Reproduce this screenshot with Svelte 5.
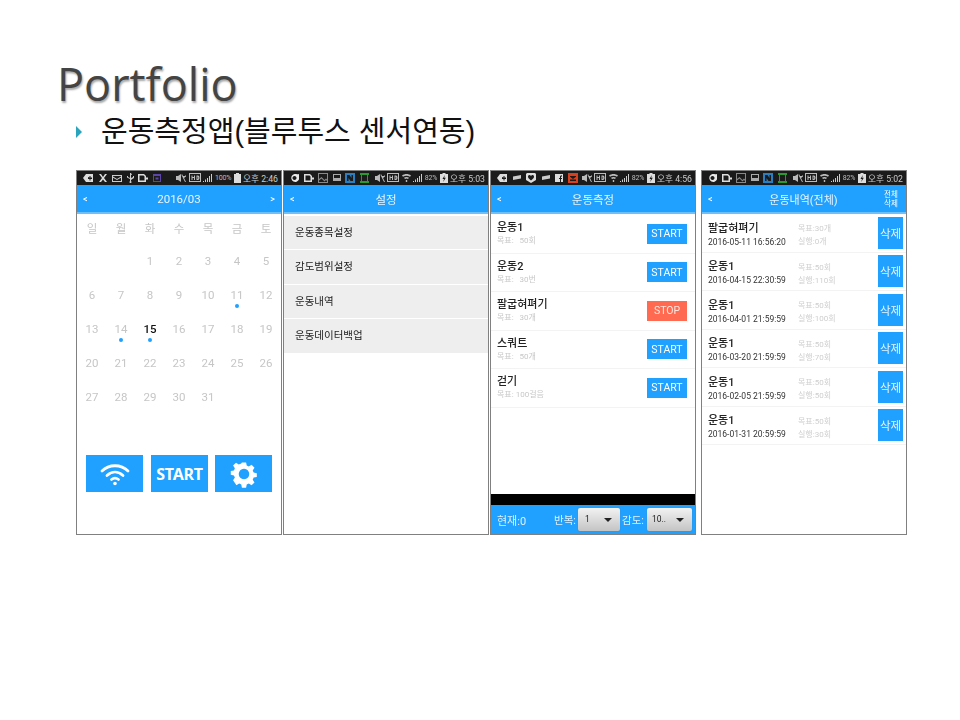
<script>
  const glyphs = {
    plus: { w: 10, fill: '#ddd', d: 'M3 1h7v8H3L0 5zM5 4v2h1.500v1.600h1V6H9V4.600H7.500V3h-1v1.600z' },
    tools: { w: 10, fill: '#ddd', d: 'M1 1l2 0 2 3 2-3 2 0-3 4 3 4H7L5 6.500 3 9H1l3-4z' },
    mail: { w: 10, fill: '#ccc', d: 'M0 2h10v7H0zM1 3v.600l4 2.400 4-2.400V3zM1 4.800V8h8V4.800L5 7z' },
    usb: { w: 7, fill: '#ccc', d: 'M3 0h1l1 2H4v3l2-1V3h1v2L4 7v1.200a1 1 0 1 1-1 0V6L0 4.600V3h1v1l2 1z' },
    doc: { w: 10, fill: '#ddd', d: 'M0 1h6l2 2v1.500h2v2H8V9H0zM1.500 2.500v5h5V3.500l-1-1z' },
    cal: { w: 8, fill: '#5b45a8', d: 'M0 1h8v8H0zM1 3v5h6V3zM2.500 4.500h3v2h-3z' },
    g: { w: 9, fill: '#e8e8e8', d: 'M4.500 1C6 1 7.400 1.400 9 1v2.400A4 4 0 1 1 4.500 1zM4.500 3a2 2 0 1 0 .01 0z' },
    pic: { w: 10, fill: '#888', d: 'M0 0h10v10H0zM1 1v5l2.500-2 3 3L8 5.500 9 6.500V1zM1 7.500V9h8V8L8 7 6.500 8.500 3.500 5.500z' },
    img: { w: 8, fill: '#aaa', d: 'M0 1h8v7H0zM1 2v3h6V2z' },
    n: { w: 10, fill: '#2a7fc0', d: 'M0 0h10v10H0zM2 2v6h1.500V5l2 3H8V2H6.500v3l-2-3z' },
    square: { w: 9, fill: '#2a9a30', d: 'M0 0h9v2H8V8h1v2H0V8h1V2H0zM2 2v6h5V2z' },
    mute: { w: 10, fill: '#bbb', d: 'M0 3h2l3-2v8L2 7H0zM6 1l4 8H9L5.500 2zM7 3l2 0 1-1v1.500L8 5z' },
    hd: { w: 12, fill: '#bbb', d: 'M0 0h12v9H0zM1 1v7h10V1zM2.500 2.500h1v1.500h1.500V2.500h1v4.500H5V5H3.500v2h-1zM7.500 2.500h1.500c2 0 2 4.500 0 4.500H7.500zM8.500 3.500v2.500c1 .300 1-2.800 0-2.500z' },
    wifi: { w: 9, fill: '#bbb', d: 'M0 2.500C2.500.500 6.500.500 9 2.500L8 3.800C6 2.300 3 2.300 1 3.800zM2 4.800C3.500 3.600 5.500 3.600 7 4.800L6 6C5 5.200 4 5.200 3 6zM3.800 7h1.400v2H3.800z' },
    signal: { w: 9, fill: '#ccc', d: 'M0 8h1v1H0zM2 6.500h1V9H2zM4 5h1v4H4zM6 3h1v6H6zM8 1h1v8H8z' },
    bat100: { w: 7, fill: '#ddd', d: 'M2 0h3v1h2v9H0V1h2z' },
    bat: { w: 8, fill: '#ddd', d: 'M0 1h2.500V0h3v1H8v9H0zM4.800 2L2.500 6h1.500L3.200 9 5.800 4.800H4.200z' },
    pill: { w: 10, fill: '#ccc', d: 'M1 3.500L9 2v3.500L1 7z' },
    heart: { w: 10, fill: '#ddd', d: 'M1 0h8l1 1v6L5 10 0 7V1zM5 3C4 1.500 2 2 2 3.800 2 5.500 4 6.500 5 7.500c1-1 3-2 3-3.700C8 2 6 1.500 5 3z' },
    f: { w: 8, fill: '#ddd', d: 'M0 1h8v8H6V6h1V5H6V4c0-.500.300-.700 1-.600V2.400C5.500 2.200 5 3 5 4v1H4v1h1v3H0z' },
    red: { w: 10, fill: '#d8401f', d: 'M0 0h10v10H0zM2 3v.800L5 6l3-2.200V3zM2 6.500V8h6V6.500z' }
  };

  const rightIcons = ['mute', 'hd', 'wifi', 'signal'];

  const days = [
    ['', '', '1', '2', '3', '4', '5'],
    ['6', '7', '8', '9', '10', '11', '12'],
    ['13', '14', '15', '16', '17', '18', '19'],
    ['20', '21', '22', '23', '24', '25', '26'],
    ['27', '28', '29', '30', '31', '', '']
  ].flat();
  const weekdays = ['일', '월', '화', '수', '목', '금', '토'];
  const dotted = ['11', '14', '15'];

  const settings = ['운동종목설정', '감도범위설정', '운동내역', '운동데이터백업'];

  const workouts = [
    { name: '운동1', goal: '목표:   50회', action: 'START' },
    { name: '운동2', goal: '목표:   30번', action: 'START' },
    { name: '팔굽혀펴기', goal: '목표:   30개', action: 'STOP' },
    { name: '스쿼트', goal: '목표:   50개', action: 'START' },
    { name: '걷기', goal: '목표: 100걸음', action: 'START' }
  ];

  const history = [
    { name: '팔굽혀펴기', date: '2016-05-11 16:56:20', goal: '목표:30개', done: '실행:0개' },
    { name: '운동1', date: '2016-04-15 22:30:59', goal: '목표:50회', done: '실행:110회' },
    { name: '운동1', date: '2016-04-01 21:59:59', goal: '목표:50회', done: '실행:100회' },
    { name: '운동1', date: '2016-03-20 21:59:59', goal: '목표:50회', done: '실행:70회' },
    { name: '운동1', date: '2016-02-05 21:59:59', goal: '목표:50회', done: '실행:50회' },
    { name: '운동1', date: '2016-01-31 20:59:59', goal: '목표:50회', done: '실행:30회' }
  ];
</script>

{#snippet icon(name)}
  <svg width={glyphs[name].w} height="10" viewBox="0 0 {glyphs[name].w} 10" aria-hidden="true">
    <path d={glyphs[name].d} fill={glyphs[name].fill} fill-rule="evenodd" />
  </svg>
{/snippet}

{#snippet statusbar(left, right, level, battery, time)}
  <div class="status">
    <div class="status-group">
      {#each left as name}{@render icon(name)}{/each}
    </div>
    <div class="status-group right">
      {#each right as name}{@render icon(name)}{/each}
      <span class="level">{level}</span>
      {@render icon(battery)}
      <span class="time">{time}</span>
    </div>
  </div>
{/snippet}

<main class="slide">
  <h1>Portfolio</h1>
  <div class="subtitle">
    <span class="bullet"></span>
    <span>운동측정앱(블루투스 센서연동)</span>
  </div>

  <div class="screens">
    <section class="screen">
      {@render statusbar(['plus', 'tools', 'mail', 'usb', 'doc', 'cal'], ['mute', 'hd', 'signal'], '100%', 'bat100', '오후 2:46')}
      <header class="bar">
        <span class="nav">&lt;</span>
        <span class="bar-title">2016/03</span>
        <span class="nav">&gt;</span>
      </header>
      <div class="weekdays">
        {#each weekdays as d}<span>{d}</span>{/each}
      </div>
      <div class="calendar">
        {#each days as d}
          <span class="day" class:today={d === '15'}>
            {d}
            {#if dotted.includes(d)}<i class="dot"></i>{/if}
          </span>
        {/each}
      </div>
      <div class="actions">
        <button class="action" aria-label="wifi">
          <svg width="30" height="24" viewBox="0 0 30 24" fill="none" stroke="#fff" stroke-width="2.800" stroke-linecap="round">
            <path d="M2 9C9 2 21 2 28 9" />
            <path d="M7 13.500C12 9 18 9 23 13.500" />
            <path d="M11.500 17.500C13.500 16 16.500 16 18.500 17.500" />
            <circle cx="15" cy="21.500" r="1.800" fill="#fff" stroke="none" />
          </svg>
        </button>
        <button class="action start">START</button>
        <button class="action" aria-label="settings">
          <svg width="28" height="28" viewBox="0 0 24 24">
            <path fill="#fff" fill-rule="evenodd" d="M10 1h4l.600 3 2 .900 2.600-1.700 2.800 2.800-1.700 2.600.900 2 3 .600v3.600l-3 .600-.900 2 1.700 2.600-2.800 2.800-2.600-1.700-2 .900-.600 3h-4l-.600-3-2-.900-2.600 1.700L1.600 18l1.700-2.600-.900-2-3-.600V9.200l3-.600.900-2L1.600 4 4.400 1.200l2.600 1.700 2.400-.900zM12 7a5 5 0 1 0 .01 0z" transform="translate(1.200 1.200) scale(.9)" />
          </svg>
        </button>
      </div>
    </section>

    <section class="screen">
      {@render statusbar(['g', 'doc', 'pic', 'img', 'n', 'square'], rightIcons, '82%', 'bat', '오후 5:03')}
      <header class="bar">
        <span class="nav">&lt;</span>
        <span class="bar-title">설정</span>
        <span class="nav"></span>
      </header>
      <div class="settings">
        {#each settings as s}<div class="setting">{s}</div>{/each}
      </div>
    </section>

    <section class="screen">
      {@render statusbar(['plus', 'pill', 'heart', 'pill', 'f', 'red'], rightIcons, '82%', 'bat', '오후 4:56')}
      <header class="bar">
        <span class="nav">&lt;</span>
        <span class="bar-title">운동측정</span>
        <span class="nav"></span>
      </header>
      <div class="workouts">
        {#each workouts as w}
          <div class="workout">
            <div>
              <div class="w-name">{w.name}</div>
              <div class="w-goal">{w.goal}</div>
            </div>
            <button class="w-btn" class:stop={w.action === 'STOP'}>{w.action}</button>
          </div>
        {/each}
      </div>
      <div class="blackbar"></div>
      <footer class="controls">
        <span class="current">현재:0</span>
        <span class="lab">반복:</span>
        <span class="select one">1<i></i></span>
        <span class="lab two">감도:</span>
        <span class="select ten">10..<i></i></span>
      </footer>
    </section>

    <section class="screen last">
      {@render statusbar(['g', 'doc', 'pic', 'img', 'n', 'square'], rightIcons, '82%', 'bat', '오후 5:02')}
      <header class="bar">
        <span class="nav">&lt;</span>
        <span class="bar-title small">운동내역(전체)</span>
        <span class="nav all">전체<br />삭제</span>
      </header>
      <div class="history">
        {#each history as h}
          <div class="record">
            <div class="r-main">
              <div class="r-name">{h.name}</div>
              <div class="r-date">{h.date}</div>
            </div>
            <div class="r-meta">
              <div>{h.goal}</div>
              <div>{h.done}</div>
            </div>
            <button class="del">삭제</button>
          </div>
        {/each}
      </div>
    </section>
  </div>
</main>

<style>
  :global(body) {
    margin: 0;
    background: #fff;
  }
  .slide {
    width: 960px;
    height: 720px;
    box-sizing: border-box;
    padding: 58px 0 0 76px;
    overflow: hidden;
    font-family: Roboto, "Noto Sans CJK KR", sans-serif;
  }
  h1 {
    margin: 0 0 0 -19px;
    height: 54px;
    font: 400 45px/52px "Open Sans", sans-serif;
    color: #444;
    text-shadow: 1px 2px 2px rgba(0, 0, 0, 0.35);
  }
  .subtitle {
    display: flex;
    align-items: center;
    height: 40px;
    font: 400 29px/40px "Liberation Sans", "Noto Sans CJK KR", sans-serif;
    color: #111;
  }
  .bullet {
    width: 0;
    height: 0;
    margin-right: 19px;
    border-left: 6px solid #2aa3bd;
    border-top: 6px solid transparent;
    border-bottom: 6px solid transparent;
  }
  .screens {
    display: flex;
    gap: 1px;
    margin-top: 18px;
    filter: blur(0.3px);
    will-change: filter;
  }
  .screen {
    width: 206px;
    height: 365px;
    box-sizing: border-box;
    border: 1px solid #808080;
    display: flex;
    flex-direction: column;
  }
  .screen.last {
    margin-left: 4px;
  }
  .status {
    flex: none;
    height: 14px;
    background: #1b1b1b;
    display: flex;
    justify-content: space-between;
    align-items: center;
    padding: 0 3px 0 6px;
    overflow: hidden;
  }
  .status-group {
    display: flex;
    align-items: center;
    gap: 4.500px;
  }
  .status-group.right {
    gap: 2.500px;
  }
  .level {
    font-size: 7px;
    color: #bbb;
    letter-spacing: -0.2px;
  }
  .time {
    font-size: 8.700px;
    color: #ccc;
    white-space: nowrap;
  }
  .bar {
    flex: none;
    height: 29px;
    box-sizing: border-box;
    border-bottom: 2px solid #6cc0ff;
    background: #20a0ff;
    color: #fff;
    display: flex;
    align-items: center;
    justify-content: space-between;
    padding: 1px 6px 0;
  }
  .nav {
    width: 14px;
    font-size: 9px;
    font-weight: 500;
    text-align: left;
  }
  .nav:last-child {
    text-align: right;
  }
  .bar-title {
    font-size: 11.500px;
    color: #e8f5ff;
  }
  .bar-title.small {
    font-size: 11px;
    margin-left: 2px;
  }
  .all {
    font-size: 7.500px;
    font-weight: 400;
    line-height: 9px;
    text-align: center !important;
    width: 16px;
    margin-right: 1px;
  }
  .weekdays,
  .calendar {
    display: grid;
    grid-template-columns: repeat(7, 29px);
    padding-left: 0.500px;
    text-align: center;
    color: #c6c6c6;
    font-size: 11.500px;
  }
  .weekdays {
    height: 28px;
    align-items: center;
  }
  .calendar {
    margin-top: 2px;
    grid-auto-rows: 34px;
  }
  .day {
    position: relative;
    display: flex;
    align-items: center;
    justify-content: center;
  }
  .today {
    color: #111;
    font-weight: 500;
  }
  .dot {
    position: absolute;
    left: 50%;
    top: 26px;
    width: 4px;
    height: 4px;
    margin-left: -2px;
    border-radius: 50%;
    background: #20a0ff;
  }
  .actions {
    display: flex;
    margin: 41px 0 0 9px;
    gap: 8px;
  }
  .action {
    width: 57px;
    height: 37px;
    padding: 0;
    border: 0;
    border-radius: 0;
    background: #20a0ff;
    color: #fff;
    display: flex;
    align-items: center;
    justify-content: center;
    font: 700 16px "Noto Sans", sans-serif;
  }
  .action.start {
    letter-spacing: -0.2px;
  }
  .action:last-child {
    margin-left: -1px;
  }
  .settings {
    margin-top: 2px;
  }
  .setting {
    height: 33.400px;
    margin-bottom: 1px;
    padding-left: 11px;
    background: #eee;
    color: #222;
    font-size: 10.500px;
    line-height: 34px;
  }
  .workouts,
  .history {
    flex: 1;
  }
  .workouts {
    padding-top: 1px;
  }
  .workout {
    height: 38.500px;
    box-sizing: border-box;
    border-bottom: 1px solid #f3f3f3;
    display: flex;
    align-items: center;
    justify-content: space-between;
    padding: 0 8px 0 6px;
  }
  .w-name {
    font-size: 11px;
    font-weight: 500;
    line-height: 14px;
    color: #222;
  }
  .w-goal {
    font-size: 8px;
    line-height: 11px;
    color: #c8c8c8;
    white-space: pre;
  }
  .w-btn {
    width: 40px;
    height: 20px;
    padding: 0;
    border: 0;
    border-radius: 0;
    background: #20a0ff;
    color: #fff;
    font: 400 10.500px Roboto, sans-serif;
  }
  .w-btn.stop {
    background: #ff6a50;
    color: #ffe6e0;
  }
  .blackbar {
    flex: none;
    height: 11px;
    background: #000;
  }
  .controls {
    flex: none;
    height: 29px;
    background: #20a0ff;
    color: #dff1ff;
    font-size: 11px;
    display: flex;
    align-items: center;
    padding-left: 6px;
  }
  .current {
    width: 57px;
  }
  .lab {
    width: 24px;
    font-size: 10.500px;
  }
  .lab.two {
    margin-left: 2px;
    margin-right: 1px;
  }
  .select {
    position: relative;
    box-sizing: border-box;
    height: 23px;
    padding-left: 7px;
    border-radius: 2px;
    background: linear-gradient(#f2f2f2, #c4c4c4);
    box-shadow: 0 0 1px #777;
    color: #222;
    font-size: 8.500px;
    line-height: 23px;
  }
  .select.one {
    width: 42px;
  }
  .select.ten {
    width: 45px;
    padding-left: 5px;
  }
  .select i {
    position: absolute;
    right: 8px;
    top: 10px;
    width: 0;
    height: 0;
    border-left: 4px solid transparent;
    border-right: 4px solid transparent;
    border-top: 4px solid #222;
  }
  .record {
    height: 38.500px;
    box-sizing: border-box;
    border-bottom: 1px solid #f3f3f3;
    display: flex;
    align-items: center;
    padding: 0 3px 0 6px;
  }
  .r-main {
    width: 90px;
    padding-top: 4px;
  }
  .r-name {
    font-size: 11px;
    font-weight: 500;
    line-height: 14px;
    color: #222;
  }
  .r-date {
    font-size: 8.500px;
    line-height: 12px;
    color: #333;
    white-space: nowrap;
  }
  .r-meta {
    flex: 1;
    font-size: 8px;
    line-height: 13px;
    color: #cfcfcf;
    padding-top: 5px;
  }
  .del {
    width: 25px;
    height: 32px;
    padding: 0;
    border: 0;
    border-radius: 0;
    background: #20a0ff;
    color: #e8f5ff;
    font: 400 11.500px Roboto, "Noto Sans CJK KR", sans-serif;
  }
</style>
